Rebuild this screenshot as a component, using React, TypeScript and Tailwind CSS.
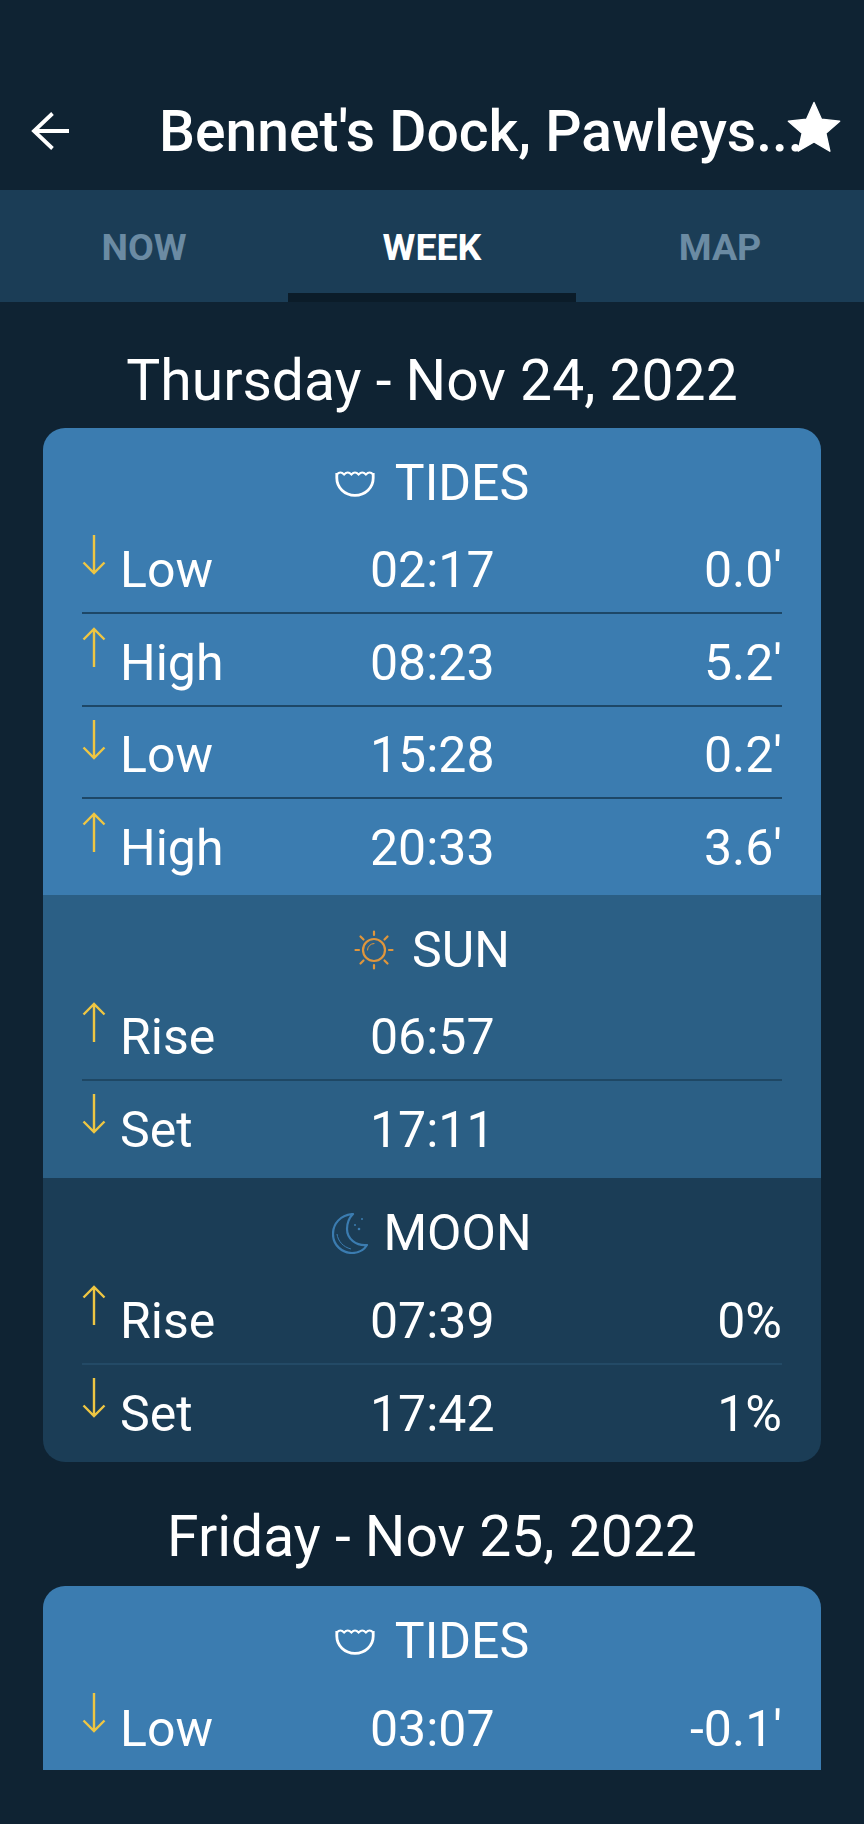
import React from "react";

const Down = () => (
  <svg width="24" height="42" viewBox="0 0 24 42" fill="none" stroke="#eec643" strokeWidth="2.4" className="shrink-0 self-start mt-[6px]">
    <path d="M12 1V39M1.500 28.500L12 39L22.500 28.500" />
  </svg>
);
const Up = () => (
  <svg width="24" height="42" viewBox="0 0 24 42" fill="none" stroke="#eec643" strokeWidth="2.4" className="shrink-0 self-start mt-[6px]">
    <path d="M12 41V3M1.500 13.500L12 3L22.500 13.500" />
  </svg>
);
const Tide = () => (
  <svg width="40" height="28" viewBox="0 0 40 28" fill="none" stroke="#fff" strokeWidth="2.800">
    <path d="M1.800 4V9C1.800 18.500 9.500 26.300 20 26.300C30.500 26.300 38.200 18.500 38.200 9V4" />
    <path d="M1.800 5.500Q5.400 1.500 9.100 5.500Q12.700 1.500 16.400 5.500Q20 1.500 23.600 5.500Q27.300 1.500 30.900 5.500Q34.600 1.500 38.200 5.500" strokeWidth="2" />
  </svg>
);
const Sun = () => (
  <svg width="40" height="40" viewBox="0 0 40 40" fill="none" stroke="#e0963c" strokeWidth="2.2" strokeLinecap="round">
    <circle cx="20" cy="20" r="11" />
    <path d="M13.500 20A6.500 6.500 0 0 1 20 13.500" strokeWidth="1" />
    <path d="M20 1.500V5M20 35V38.500M1.500 20H5M35 20H38.500M6.500 6.500L9.500 9.500M30.500 30.500L33.500 33.500M6.500 33.500L9.500 30.500M30.500 9.500L33.500 6.500" />
  </svg>
);
const Moon = () => (
  <svg width="36" height="41" viewBox="0 0 36 41" fill="none" stroke="#3b7cb0" strokeWidth="2.2" strokeLinejoin="round">
    <path d="M21 1C8 2 1 11 1 21C1 32 10 40 20 40C26 40 32 37 35 32C24 33 15 26 15 16C15 10 17 5 21 1Z" />
    <path d="M5 21C6 28 11 34 19 36" strokeWidth="1" />
    <circle cx="23" cy="12" r="1" fill="#3b7cb0" strokeWidth="0" />
    <circle cx="27" cy="16" r="1.300" fill="#3b7cb0" strokeWidth="0" />
    <circle cx="30" cy="6" r="1" fill="#3b7cb0" strokeWidth="0" />
  </svg>
);

type R = { up: boolean; label: string; time: string; value?: string };

const Row = ({ r, line, last }: { r: R; line: string; last: boolean }) => (
  <div className={`flex items-center h-[92.400px] pt-[6px] ${last ? "" : `border-b-2 ${line}`}`}>
    {r.up ? <Up /> : <Down />}
    <div className="ml-[14px] w-[250px]">{r.label}</div>
    <div className="w-[122px] whitespace-nowrap">{r.time}</div>
    <div className="flex-1 text-right">{r.value}</div>
  </div>
);

const Section = ({ bg, line, icon, title, gap, rows, pb }: { bg: string; line: string; icon: React.ReactNode; title: string; gap: string; rows: R[]; pb: string }) => (
  <section className={`${bg} ${pb}`}>
    <div className={`flex items-center justify-center h-[94px] pt-[16px] ${gap} text-[50px] leading-none`}>
      {icon}
      <span>{title}</span>
    </div>
    <div className="px-[39px]">
      {rows.map((r, i) => (
        <Row key={i} r={r} line={line} last={i === rows.length - 1} />
      ))}
    </div>
  </section>
);

const tides1: R[] = [
  { up: false, label: "Low", time: "02:17", value: "0.0'" },
  { up: true, label: "High", time: "08:23", value: "5.2'" },
  { up: false, label: "Low", time: "15:28", value: "0.2'" },
  { up: true, label: "High", time: "20:33", value: "3.6'" },
];
const sun1: R[] = [
  { up: true, label: "Rise", time: "06:57" },
  { up: false, label: "Set", time: "17:11" },
];
const moon1: R[] = [
  { up: true, label: "Rise", time: "07:39", value: "0%" },
  { up: false, label: "Set", time: "17:42", value: "1%" },
];

export default function App() {
  return (
    <div className="w-[864px] h-[1824px] overflow-hidden bg-[#0f2333] text-white text-[50px] leading-none" style={{ fontFamily: "Roboto, sans-serif" }}>
      <header className="flex items-center h-[190px] pt-[72px] pl-[31px] pr-[21px]">
        <svg width="38" height="38" viewBox="0 0 38 38" fill="none" stroke="#fff" strokeWidth="3.800" className="shrink-0">
          <path d="M38 19H3M21.500 1.500L3 19L21.500 36.500" />
        </svg>
        <div className="ml-[90px] flex-1 min-w-0 text-[57px] font-medium whitespace-nowrap">Bennet's Dock, Pawleys...</div>
        <svg width="58" height="56" viewBox="0 0 24 24" fill="#fff" stroke="#fff" strokeWidth="0.6" strokeLinejoin="round" className="shrink-0 -mt-[8px]">
          <path d="M12 1.500l3.200 7.200 7.800.800-5.900 5.200 1.700 7.700L12 18.400l-6.800 4 1.700-7.700L1 9.500l7.800-.8z" />
        </svg>
      </header>

      <nav className="grid grid-cols-3 h-[112px] bg-[#1b3d56] text-[37.500px] font-bold text-center text-[#6b8ba3]">
        <div className="flex items-center justify-center pt-[12px] border-b-[9px] border-transparent">NOW</div>
        <div className="flex items-center justify-center pt-[12px] border-b-[9px] border-[#0b1c29] text-white">WEEK</div>
        <div className="flex items-center justify-center pt-[12px] border-b-[9px] border-transparent">MAP</div>
      </nav>

      <main className="h-[1468px] overflow-hidden px-[43px]">
        <h2 className="h-[126px] flex items-center justify-center text-[57px] font-normal pt-[30px] whitespace-nowrap">Thursday - Nov 24, 2022</h2>
        <div className="rounded-[22px] overflow-hidden">
          <Section bg="bg-[#3b7cb0]" line="border-[#1d4767]" icon={<Tide />} gap="gap-[20px]" title="TIDES" rows={tides1} pb="pb-[3px]" />
          <Section bg="bg-[#2b5f85]" line="border-[#1e4764]" icon={<Sun />} gap="gap-[18px]" title="SUN" rows={sun1} pb="pb-[5px]" />
          <Section bg="bg-[#1b3d56]" line="border-[#234a66]" icon={<Moon />} gap="gap-[15px]" title="MOON" rows={moon1} pb="pb-[5px]" />
        </div>
        <h2 className="h-[124px] flex items-center justify-center text-[57px] font-normal pt-[24px] whitespace-nowrap">Friday - Nov 25, 2022</h2>
        <div className="rounded-[22px] overflow-hidden">
          <Section bg="bg-[#3b7cb0]" line="border-[#1d4767]" icon={<Tide />} gap="gap-[20px]" title="TIDES" rows={[{ up: false, label: "Low", time: "03:07", value: "-0.1'" }]} pb="pb-[100px]" />
        </div>
      </main>
    </div>
  );
}
